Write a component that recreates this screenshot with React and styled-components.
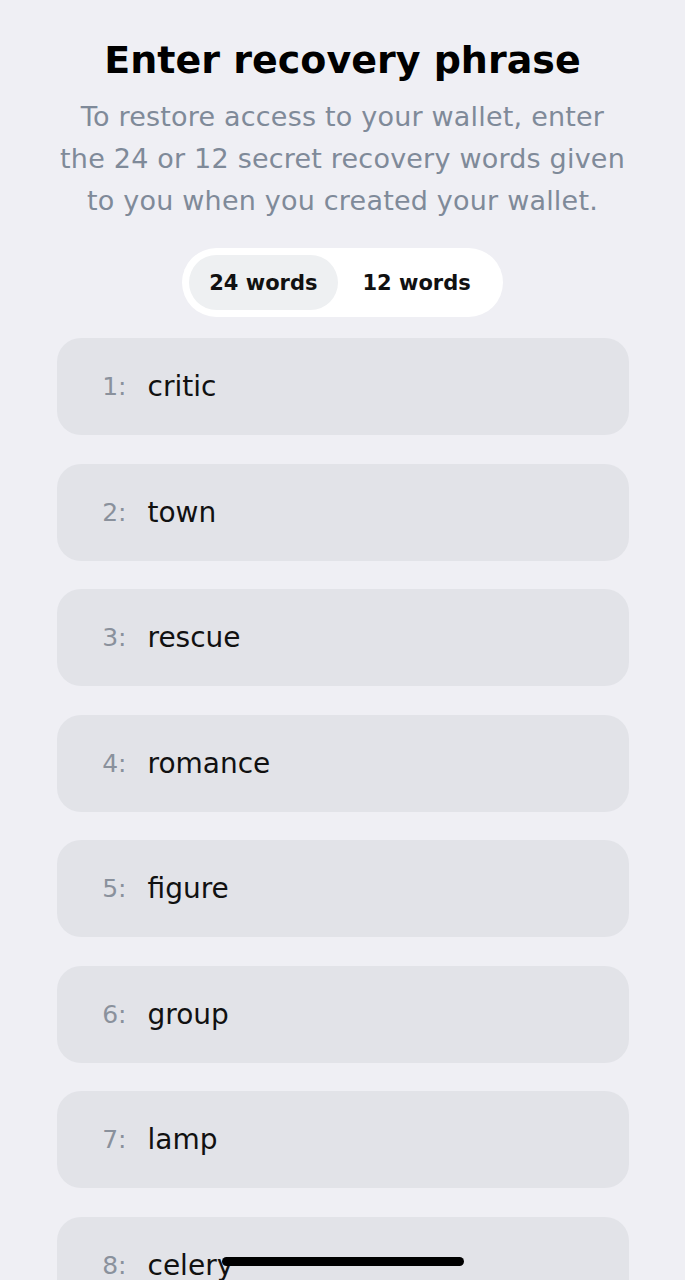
import React, { useState } from 'react'
import styled, { createGlobalStyle } from 'styled-components'

const GlobalStyle = createGlobalStyle`
  html, body {
    margin: 0;
    padding: 0;
    background: #efeff4;
  }
  body {
    font-family: "DejaVu Sans", "Noto Sans", sans-serif;
    -webkit-font-smoothing: antialiased;
  }
`

const Screen = styled.div`
  display: flex;
  flex-direction: column;
  align-items: center;
  padding-top: 36px;
  box-sizing: border-box;
  overflow: hidden;
  height: 1280px;
`

const Title = styled.h1`
  margin: 0;
  font-size: 38px;
  font-weight: 700;
  color: #000;
  line-height: 48px;
`

const Subtitle = styled.p`
  margin: 12px 0 0;
  width: 660px;
  text-align: center;
  font-size: 27px;
  letter-spacing: 0.2px;
  line-height: 42px;
  color: #7f8a99;
`

const Toggle = styled.div`
  margin-top: 26px;
  display: flex;
  padding: 7px;
  background: #fff;
  border-radius: 36px;
`

const ToggleOption = styled.button`
  border: none;
  font-family: inherit;
  height: 55px;
  padding: 0 ${(p) => (p.$active ? '20px' : '25px')};
  border-radius: 28px;
  background: ${(p) => (p.$active ? '#eef0f2' : 'transparent')};
  color: #111;
  font-size: 21px;
  font-weight: 600;
  cursor: pointer;
`

const List = styled.div`
  margin-top: 21px;
  width: 572px;
  display: flex;
  flex-direction: column;
  gap: 28.5px;
`

const Row = styled.div`
  height: 97px;
  border-radius: 24px;
  background: #e2e3e8;
  display: flex;
  align-items: center;
  flex-shrink: 0;
`

const Index = styled.span`
  width: 70px;
  text-align: right;
  font-size: 25px;
  color: #8a919c;
`

const Word = styled.span`
  margin-left: 21px;
  font-size: 28px;
  color: #111;
`

const HomeIndicator = styled.div`
  position: fixed;
  left: 222px;
  top: 1257px;
  width: 242px;
  height: 9px;
  border-radius: 5px;
  background: #000;
`

const words = ['critic', 'town', 'rescue', 'romance', 'figure', 'group', 'lamp', 'celery']

export default function App() {
  const [mode, setMode] = useState(24)
  return (
    <>
      <GlobalStyle />
      <Screen>
        <Title>Enter recovery phrase</Title>
        <Subtitle>
          To restore access to your wallet, enter
          <br />
          the 24 or 12 secret recovery words given
          <br />
          to you when you created your wallet.
        </Subtitle>
        <Toggle>
          <ToggleOption $active={mode === 24} onClick={() => setMode(24)}>24 words</ToggleOption>
          <ToggleOption $active={mode === 12} onClick={() => setMode(12)}>12 words</ToggleOption>
        </Toggle>
        <List>
          {words.map((w, i) => (
            <Row key={w}>
              <Index>{i + 1}:</Index>
              <Word>{w}</Word>
            </Row>
          ))}
        </List>
      </Screen>
      <HomeIndicator />
    </>
  )
}
